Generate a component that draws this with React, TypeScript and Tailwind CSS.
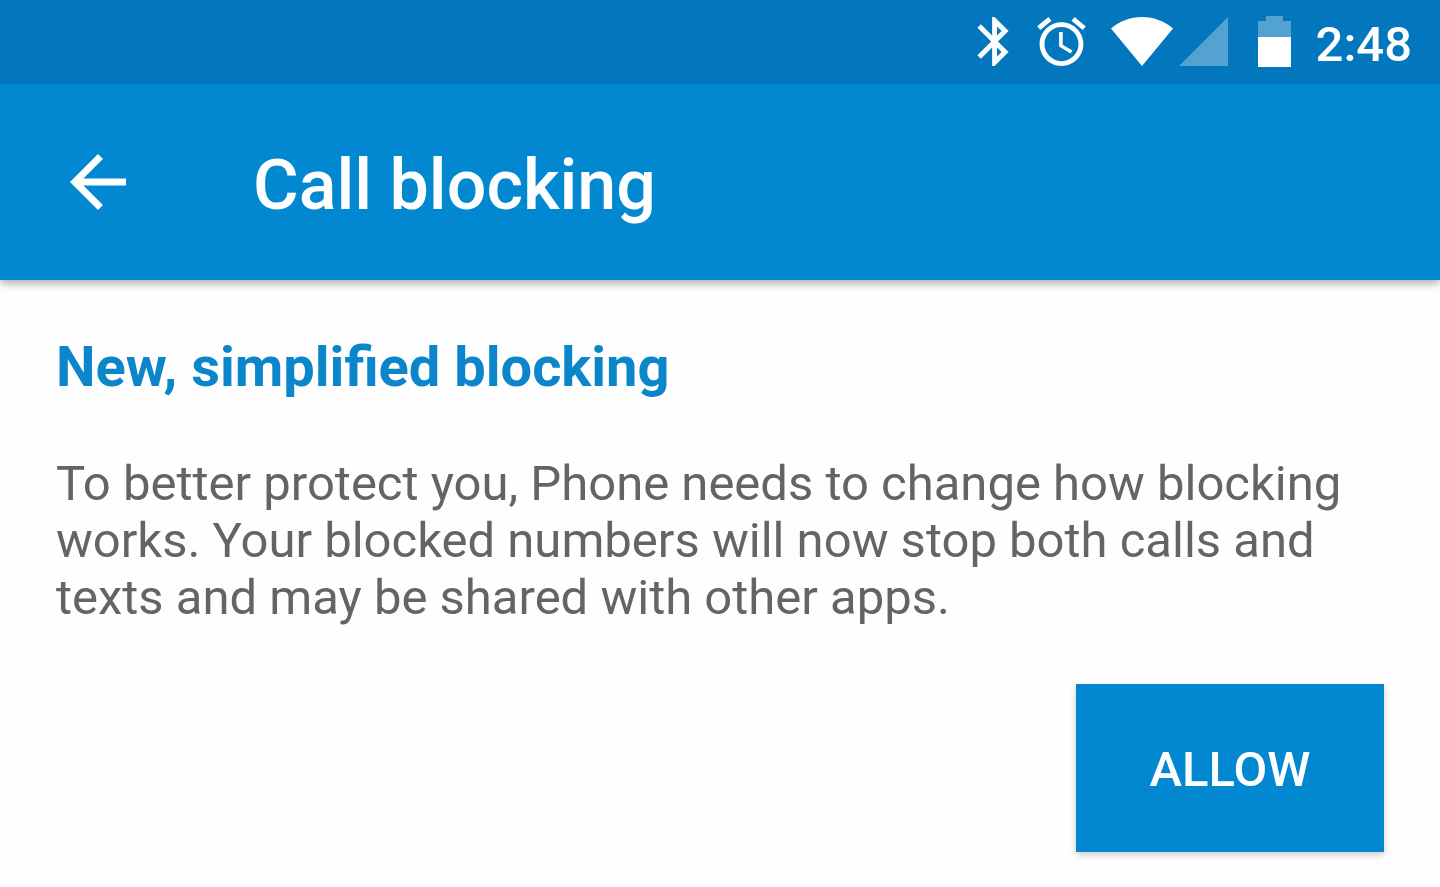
import React from 'react';

const BluetoothIcon: React.FC = () => (
  <svg viewBox="5 2 12.71 20" className="w-8 h-[49px]" fill="currentColor" aria-hidden="true">
    <path d="M17.71 7.71L12 2h-1v7.59L6.41 5 5 6.41 10.59 12 5 17.59 6.41 19 11 14.41V22h1l5.71-5.71-4.3-4.29 4.3-4.29zM13 5.83l1.88 1.88L13 9.59V5.83zm1.88 10.46L13 18.17v-3.76l1.88 1.88z" />
  </svg>
);

const AlarmIcon: React.FC = () => (
  <svg viewBox="2 1.86 20 20.14" className="w-[49px] h-[49px]" fill="currentColor" aria-hidden="true">
    <path d="M22 5.72l-4.6-3.86-1.29 1.53 4.6 3.86L22 5.72zM7.88 3.39L6.6 1.86 2 5.71l1.29 1.53 4.59-3.85zM12.5 8H11v6l4.75 2.85.75-1.23-4-2.37V8zM12 4c-4.97 0-9 4.03-9 9s4.02 9 9 9c4.97 0 9-4.03 9-9s-4.03-9-9-9zm0 16c-3.87 0-7-3.13-7-7s3.13-7 7-7 7 3.13 7 7-3.13 7-7 7z" />
  </svg>
);

const WifiIcon: React.FC = () => (
  <svg viewBox="0 0 62 49" className="w-[62px] h-[49px]" fill="currentColor" aria-hidden="true">
    <path d="M31 49L0 11.5C8 4.5 19 0 31 0s23 4.5 31 11.5z" />
  </svg>
);

const SignalIcon: React.FC = () => (
  <svg viewBox="0 0 49 49" className="w-[49px] h-[49px]" fill="currentColor" aria-hidden="true">
    <path d="M0 49L49 0v49z" opacity="0.32" />
  </svg>
);

const BatteryIcon: React.FC = () => (
  <svg viewBox="0 0 33 51" className="w-[33px] h-[51px]" fill="currentColor" aria-hidden="true">
    <path d="M0 21V5h8V0h17v5h8v16z" opacity="0.32" />
    <path d="M0 21h33v30H0z" />
  </svg>
);

const StatusBar: React.FC = () => (
  <div className="relative z-10 flex h-21 items-center justify-end gap-[25px] bg-[#0277bd] px-7 pb-[2px] text-white">
    <div className="flex items-center gap-7">
      <BluetoothIcon />
      <AlarmIcon />
    </div>
    <div className="flex items-center gap-[30px]">
      <div className="flex items-center gap-[6px]">
        <WifiIcon />
        <SignalIcon />
      </div>
      <BatteryIcon />
    </div>
    <time className="pt-[6px] text-[49px] leading-[57px] font-medium">2:48</time>
  </div>
);

const AppBar: React.FC = () => (
  <header className="relative flex h-49 items-center gap-[113px] bg-[#0288d1] px-14 text-white shadow-[0_3px_9px_rgba(0,0,0,0.35)]">
    <button type="button" aria-label="Back" className="shrink-0">
      <svg viewBox="0 0 24 24" className="block w-21 h-21" fill="currentColor" aria-hidden="true">
        <path d="M20 11H7.83l5.59-5.59L12 4l-8 8 8 8 1.41-1.41L7.83 13H20v-2z" />
      </svg>
    </button>
    <h1 className="pt-[6px] text-[70px] leading-[82px] font-medium">Call blocking</h1>
  </header>
);

const App: React.FC = () => {
  return (
    <div className="min-h-screen bg-[#fefefe] font-[Roboto,sans-serif]">
      <StatusBar />
      <AppBar />
      <main className="px-14 pt-[54px] pb-8">
        <h2 className="text-[56px] leading-[66px] font-bold text-[#0b86cb]">New, simplified blocking</h2>
        <p className="mt-[55px] text-[49px] leading-[57px] text-[#646464]">
          To better protect you, Phone needs to change how blocking works. Your blocked numbers will now stop both
          calls and texts and may be shared with other apps.
        </p>
        <div className="mt-[58px] flex justify-end">
          <button
            type="button"
            className="h-42 w-77 bg-[#0288d1] pt-[2px] text-[49px] leading-[57px] font-medium text-white shadow-[0_3px_7px_rgba(0,0,0,0.2)]"
          >
            ALLOW
          </button>
        </div>
      </main>
    </div>
  );
};

export default App;
